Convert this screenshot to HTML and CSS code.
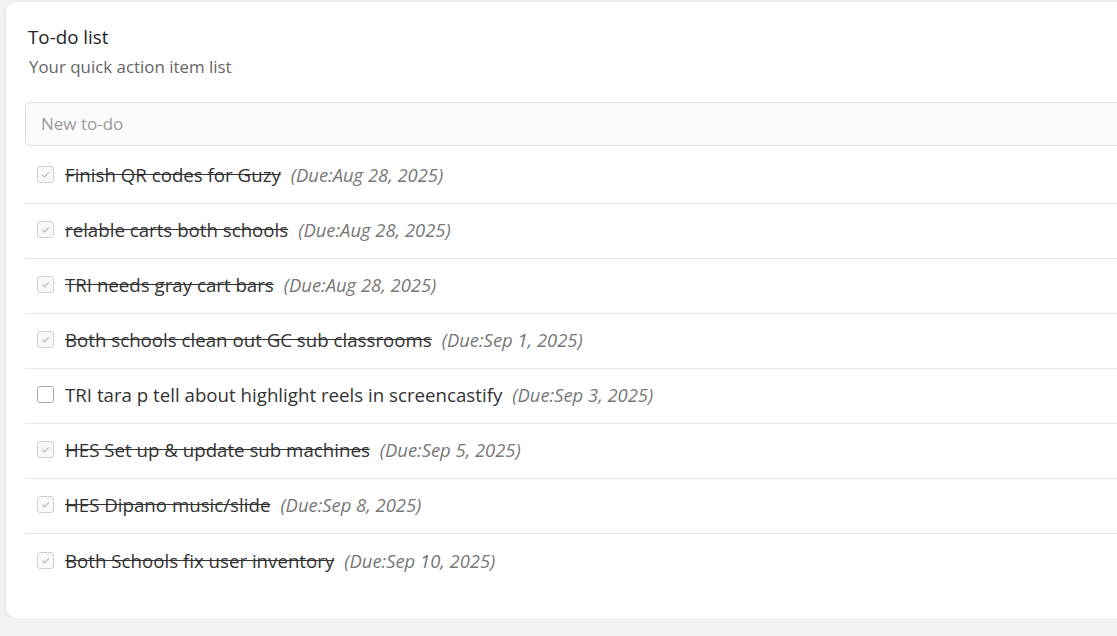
FILE: index.html
```html
<!DOCTYPE html>
<html lang="en">
<head>
<meta charset="utf-8">
<title>To-do list</title>
<link rel="stylesheet" href="styles.css">
</head>
<body>
<div class="page">
  <section class="card">
    <header class="card-head">
      <h1 class="title">To-do list</h1>
      <p class="subtitle">Your quick action item list</p>
    </header>
    <div class="new-todo">New to-do</div>
    <ul class="list">
      <li class="item done"><span class="box"><svg viewBox="0 0 16 16"><path d="M4.5 8.2l2.4 2.3 4.6-4.8"/></svg></span><span class="text">Finish QR codes for Guzy</span><span class="due">(Due:Aug 28, 2025)</span></li>
      <li class="item done"><span class="box"><svg viewBox="0 0 16 16"><path d="M4.5 8.2l2.4 2.3 4.6-4.8"/></svg></span><span class="text">relable carts both schools</span><span class="due">(Due:Aug 28, 2025)</span></li>
      <li class="item done"><span class="box"><svg viewBox="0 0 16 16"><path d="M4.5 8.2l2.4 2.3 4.6-4.8"/></svg></span><span class="text">TRI needs gray cart bars</span><span class="due">(Due:Aug 28, 2025)</span></li>
      <li class="item done"><span class="box"><svg viewBox="0 0 16 16"><path d="M4.5 8.2l2.4 2.3 4.6-4.8"/></svg></span><span class="text">Both schools clean out GC sub classrooms</span><span class="due">(Due:Sep 1, 2025)</span></li>
      <li class="item"><span class="box open"></span><span class="text">TRI tara p tell about highlight reels in screencastify</span><span class="due">(Due:Sep 3, 2025)</span></li>
      <li class="item done"><span class="box"><svg viewBox="0 0 16 16"><path d="M4.5 8.2l2.4 2.3 4.6-4.8"/></svg></span><span class="text">HES Set up &amp; update sub machines</span><span class="due">(Due:Sep 5, 2025)</span></li>
      <li class="item done"><span class="box"><svg viewBox="0 0 16 16"><path d="M4.5 8.2l2.4 2.3 4.6-4.8"/></svg></span><span class="text">HES Dipano music/slide</span><span class="due">(Due:Sep 8, 2025)</span></li>
      <li class="item done last"><span class="box"><svg viewBox="0 0 16 16"><path d="M4.5 8.2l2.4 2.3 4.6-4.8"/></svg></span><span class="text">Both Schools fix user inventory</span><span class="due">(Due:Sep 10, 2025)</span></li>
    </ul>
  </section>
</div>
</body>
</html>
```

FILE: styles.css
```css
* { box-sizing: border-box; }
html, body {
  margin: 0;
  padding: 0;
  background: #f2f2f2;
  overflow: hidden;
}
body {
  font-family: "Open Sans", "Noto Sans", sans-serif;
  color: #333;
}
.page {
  padding: 2px 0 0 6px;
  width: 1200px;
}
.card {
  width: 1160px;
  background: #fff;
  border-radius: 10px;
  box-shadow: 0 1px 4px rgba(0,0,0,0.10);
  padding: 19px 19px 29px 19px;
}
.card-head {
  padding-left: 3px;
}
.title {
  margin: 1px 0 0 0;
  font-size: 18.8px;
  font-weight: 400;
  line-height: 30px;
  color: #222;
}
.subtitle {
  margin: 0 0 0 1px;
  font-size: 16.9px;
  line-height: 30px;
  color: #666;
}
.new-todo {
  margin-top: 20px;
  height: 44px;
  border: 1px solid #e1e1e1;
  border-radius: 4px;
  background: #fbfbfd;
  padding: 0 15px 2px 15px;
  display: flex;
  align-items: center;
  font-size: 17px;
  color: #9a9a9a;
}
.list {
  list-style: none;
  margin: 3px 0 0 0;
  padding: 0;
}
.item {
  display: flex;
  align-items: center;
  height: 55px;
  padding: 0 0 3px 12px;
  border-bottom: 1px solid #e6e6e6;
  font-size: 18.7px;
}
.item.last { border-bottom: none; }
.box {
  flex: none;
  width: 17px;
  height: 17px;
  border: 1px solid #d2d2d2;
  border-radius: 3px;
  background: #f8f8f8;
  margin-right: 11px;
  display: flex;
  align-items: center;
  justify-content: center;
}
.box svg {
  width: 15px;
  height: 15px;
  fill: none;
  stroke: #b8b8b8;
  stroke-width: 1.2;
}
.box.open {
  border-color: #a8a8a8;
  background: #fff;
}
.text { color: #333; }
.done .text { text-decoration: line-through; }
.due {
  margin-left: 10px;
  font-style: italic;
  color: #777;
  font-size: 18.4px;
}
```
